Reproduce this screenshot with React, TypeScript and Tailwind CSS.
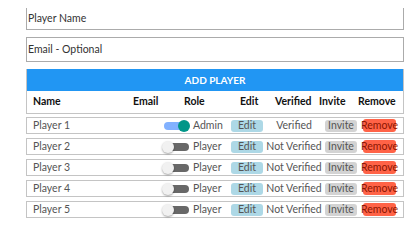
import React from "react";

const players = [
  { name: "Player 1", admin: true, verified: true },
  { name: "Player 2", admin: false, verified: false },
  { name: "Player 3", admin: false, verified: false },
  { name: "Player 4", admin: false, verified: false },
  { name: "Player 5", admin: false, verified: false },
];

function Toggle({ on }: { on: boolean }) {
  return (
    <div className="relative w-[28px] h-[12px] flex items-center">
      <div
        className={
          on
            ? "ml-[2px] w-[24px] h-[8px] rounded-full bg-[#82b1ff]"
            : "ml-[2px] w-[25px] h-[8px] rounded-full bg-[#686868]"
        }
      />
      {/* Thumb */}
      <div
        className={
          on
            ? "absolute right-0 top-0 w-[12px] h-[12px] rounded-full bg-[#009688]"
            : "absolute left-0 top-0 w-[12px] h-[12px] rounded-full bg-[#f1f1f1] shadow-[0_1px_2px_rgba(0,0,0,0.35)]"
        }
      />
    </div>
  );
}

export default function App() {
  return (
    <div
      className="w-[405px] h-[228px] bg-white overflow-hidden pl-[26px] pr-[1px] pt-[8px] text-[10.5px]"
      style={{ fontFamily: 'Lato, "Open Sans", sans-serif' }}
    >
      {/* Inputs */}
      <div className="h-[22px] border-x-[1.5px] border-b-[1.5px] border-[#ababab] flex items-center pl-[1px] text-[#333]">
        Player Name
      </div>
      <div className="mt-[7px] h-[25px] border-[1.5px] border-[#ababab] flex items-center pl-[1px] text-[#333]">
        Email - Optional
      </div>

      {/* Table header */}
      <div className="mt-[7px] border-x-[1.5px] border-b-[1.5px] border-[#c4c4c4]">
        <div className="h-[22px] bg-[#2196f3] flex items-center justify-center text-white font-bold text-[10px]">
          ADD PLAYER
        </div>
        <div className="h-[22px] flex items-center pl-[6px] font-bold text-[#111] text-[10.5px]">
          <div className="w-[100px]">Name</div>
          <div className="w-[51px]">Email</div>
          <div className="w-[56px]">Role</div>
          <div className="w-[35px]">Edit</div>
          <div className="w-[44px]">Verified</div>
          <div className="w-[39px]">Invite</div>
          <div>Remove</div>
        </div>
      </div>

      {/* Rows */}
      <div className="mt-[3px] flex flex-col gap-[4px]">
        {players.map((p) => (
          <div
            key={p.name}
            className="h-[17px] border-[1.5px] border-[#c4c4c4] flex items-center pl-[6px] text-[#555]"
          >
            <div className="w-[129px]">{p.name}</div>
            <Toggle on={p.admin} />
            <div className="ml-[3px] w-[38px]">{p.admin ? "Admin" : "Player"}</div>
            <div className="w-[32px] h-[12px] rounded-[3px] bg-[#add8e6] flex items-center justify-center">
              Edit
            </div>
            <div className="w-[62px] text-center">{p.verified ? "Verified" : "Not Verified"}</div>
            <div className="w-[32px] h-[12px] rounded-[3px] bg-[#d3d3d3] flex items-center justify-center">
              Invite
            </div>
            <div className="ml-[6px] w-[33px] h-[13px] rounded-[3px] bg-[#ff6347] text-[#8b1500] flex items-center justify-center">
              Remove
            </div>
          </div>
        ))}
      </div>
    </div>
  );
}
